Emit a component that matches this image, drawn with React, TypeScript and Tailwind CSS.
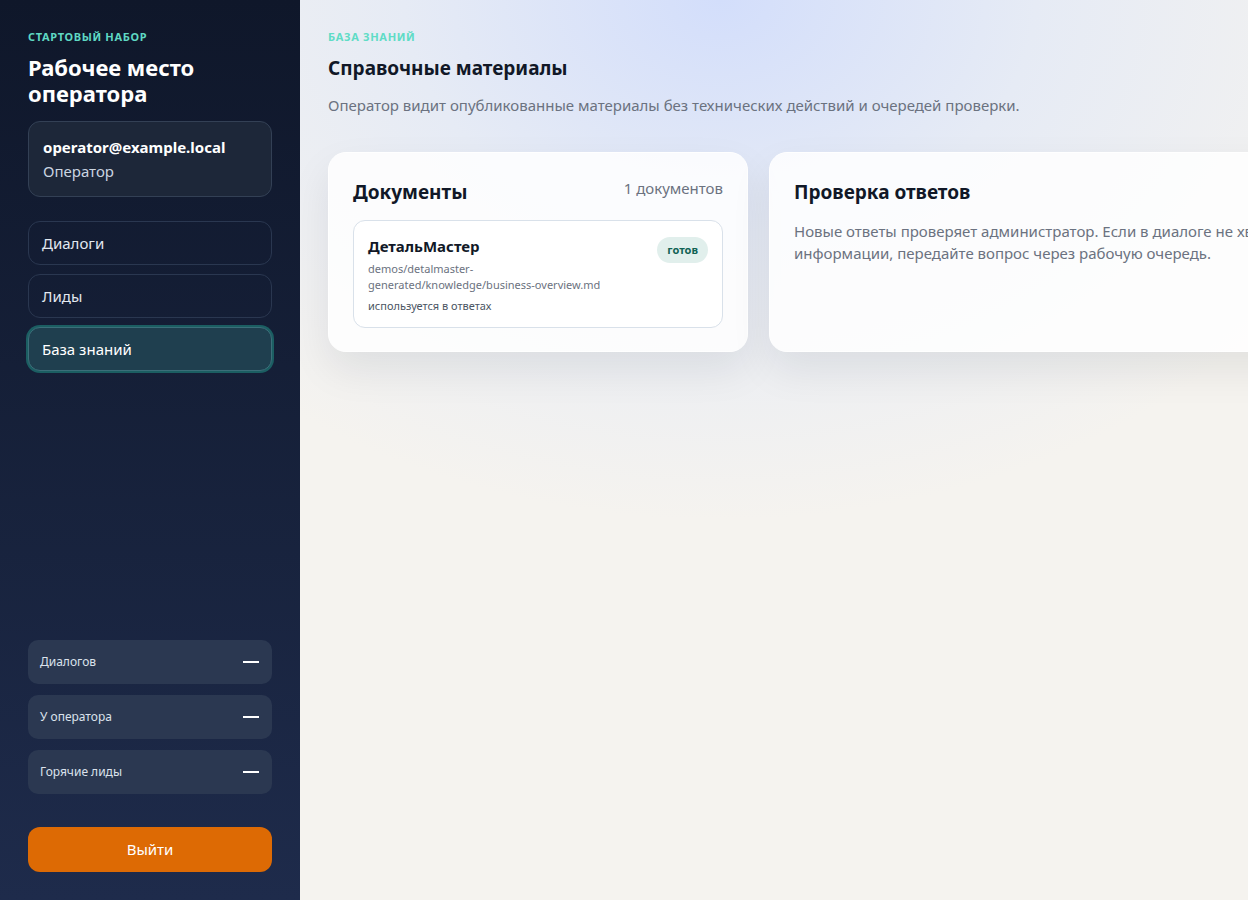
const font = { fontFamily: '"Noto Sans", "Open Sans", sans-serif' };

function NavItem({ label, active }: { label: string; active?: boolean }) {
  if (active) {
    return (
      <div className="flex h-[44px] items-center rounded-[12px] border border-[#3b6f7a] bg-[#1f3f4f] px-[13px] pt-[2px] text-[15px] text-white shadow-[0_0_0_2px_#1b5e62]">
        {label}
      </div>
    );
  }
  return (
    <div className="flex h-[44px] items-center rounded-[12px] border border-[#2a3750] px-[13px] pt-[2px] text-[15px] text-[#e2e8f0]">
      {label}
    </div>
  );
}

function Stat({ label }: { label: string }) {
  return (
    <div className="flex h-[44px] items-center justify-between rounded-[10px] bg-[#2b3851] px-[12px]">
      <span className="text-[12px] text-[#dbe2ec]">{label}</span>
      <span className="mr-[1px] h-[2px] w-[16px] bg-white" />
    </div>
  );
}

export default function App() {
  return (
    <div className="flex h-[900px] w-[1248px] overflow-hidden" style={font}>
      <aside className="flex w-[300px] shrink-0 flex-col bg-gradient-to-b from-[#0f172a] to-[#1e2b4b] px-[28px] pb-[28px] pt-[29px]">
        <div className="text-[11px] font-bold uppercase tracking-[0.06em] text-[#5fd9c3]">Стартовый набор</div>
        <h1 className="mt-[8px] text-[22px] font-bold leading-[26px] text-white">Рабочее место оператора</h1>
        <div className="mt-[15px] rounded-[12px] border border-[#334055] bg-[#1d2739] px-[14px] py-[13px]">
          <div className="text-[15px] font-bold leading-[24px] text-white">operator@example.local</div>
          <div className="text-[15px] leading-[24px] text-[#cbd5e1]">Оператор</div>
        </div>
        <nav className="mt-[24px] flex flex-col gap-[9px]">
          <NavItem label="Диалоги" />
          <NavItem label="Лиды" />
          <NavItem label="База знаний" active />
        </nav>
        <div className="mt-auto flex flex-col gap-[11px]">
          <Stat label="Диалогов" />
          <Stat label="У оператора" />
          <Stat label="Горячие лиды" />
        </div>
        <button className="mt-[33px] h-[45px] rounded-[12px] bg-[#dd6a04] text-[15px] text-white">Выйти</button>
      </aside>

      <main className="relative flex-1 overflow-hidden bg-[#f5f3ef]">
        <div className="pointer-events-none absolute inset-0 bg-[radial-gradient(ellipse_700px_520px_at_420px_0px,#d3defb_0%,#e6ebf5_45%,rgba(245,243,239,0)_100%)]" />
        <div className="relative px-[28px] pt-[29px]">
          <div className="text-[11px] font-bold uppercase tracking-[0.06em] text-[#5fdcc6]">База знаний</div>
          <h2 className="mt-[9px] text-[19px] font-bold leading-[26px] text-[#111827]">Справочные материалы</h2>
          <p className="mt-[13px] text-[15px] text-[#6b7280]">
            Оператор видит опубликованные материалы без технических действий и очередей проверки.
          </p>

          <div className="mt-[36px] flex gap-[21px]">
            <section className="h-[200px] w-[420px] shrink-0 rounded-[18px] border border-white bg-white/85 px-[24px] pt-[25px] shadow-[0_18px_40px_rgba(15,23,42,0.08)]">
              <div className="flex items-start justify-between">
                <h3 className="text-[19px] font-bold leading-[28px] text-[#111827]">Документы</h3>
                <span className="text-[15px] leading-[20px] text-[#6b7280]">1 документов</span>
              </div>
              <div className="mt-[14px] flex items-start justify-between rounded-[12px] border border-[#d9e1ea] bg-white px-[14px] pb-[13px] pt-[14px]">
                <div className="flex flex-col">
                  <div className="text-[15px] font-bold leading-[22px] text-[#111827]">ДетальМастер</div>
                  <div className="mt-[4px] w-[260px] text-[11px] leading-[16px] text-[#6b7280]">
                    demos/detalmaster-generated/knowledge/business-overview.md
                  </div>
                  <div className="mt-[5px] text-[11px] leading-[16px] text-[#4b5563]">используется в ответах</div>
                </div>
                <span className="mt-[2px] rounded-full bg-[#e1efec] px-[10px] py-[5px] text-[11px] font-bold leading-[16px] text-[#116355]">
                  готов
                </span>
              </div>
            </section>

            <section className="h-[200px] w-[560px] shrink-0 rounded-[18px] border border-white bg-white/85 px-[24px] pt-[25px] shadow-[0_18px_40px_rgba(15,23,42,0.08)]">
              <h3 className="text-[19px] font-bold leading-[28px] text-[#111827]">Проверка ответов</h3>
              <p className="mt-[14px] text-[15px] leading-[22px] text-[#6b7280]">
                Новые ответы проверяет администратор. Если в диалоге не хватает информации, передайте вопрос через рабочую очередь.
              </p>
            </section>
          </div>
        </div>
      </main>
    </div>
  );
}
